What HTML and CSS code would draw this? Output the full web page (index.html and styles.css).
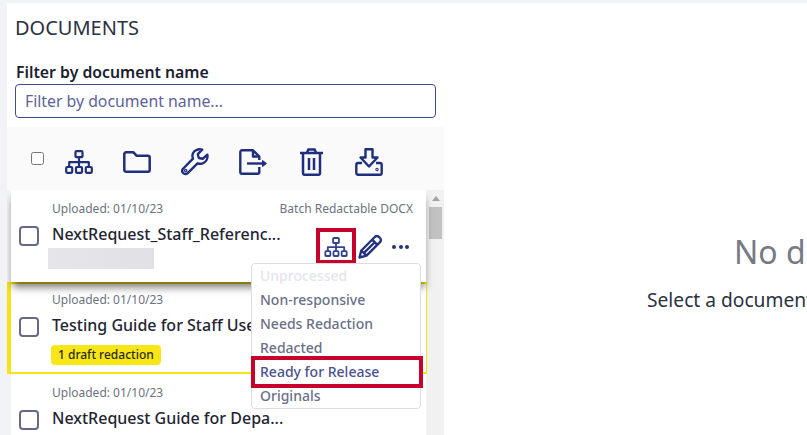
FILE: index.html
```html
<!DOCTYPE html>
<html lang="en">
<head>
<meta charset="utf-8">
<title>Documents</title>
<link rel="stylesheet" href="styles.css">
</head>
<body>
<svg class="defs" width="0" height="0" aria-hidden="true">
  <symbol id="org" viewBox="0 0 28 24">
    <g fill="none" stroke="currentColor" stroke-width="2.2" stroke-linejoin="round">
      <rect x="10.5" y="1.2" width="7" height="6" rx="1"/>
      <rect x="1.2" y="17" width="6" height="5.8" rx="1"/>
      <rect x="11" y="17" width="6" height="5.8" rx="1"/>
      <rect x="20.8" y="17" width="6" height="5.8" rx="1"/>
      <path d="M14 7.2V17M4.2 17v-4.8h19.6V17"/>
    </g>
  </symbol>
</svg>
<div class="page">
  <main class="panel">
    <div class="head">
      <h1 class="title">DOCUMENTS</h1>
      <label class="label" for="filter">Filter by document name</label>
      <input class="filter" id="filter" type="text" placeholder="Filter by document name...">
    </div>
    <div class="toolbar">
      <input class="all" type="checkbox">
      <div class="tools">
        <span class="tool"><svg class="i-org"><use href="#org"/></svg></span>
        <span class="tool">
          <svg class="i-folder" viewBox="0 0 28 22" fill="none" stroke="currentColor" stroke-width="2.5" stroke-linejoin="round"><path d="M1.3 3a1.7 1.7 0 0 1 1.7-1.7h7.5l3 3.4H25a1.7 1.7 0 0 1 1.7 1.7V19a1.7 1.7 0 0 1-1.7 1.7H3A1.7 1.7 0 0 1 1.3 19z"/></svg>
        </span>
        <span class="tool">
          <svg class="i-wrench" viewBox="0 0 28 28" fill="none" stroke="currentColor" stroke-width="2.4" stroke-linejoin="round" stroke-linecap="round"><path d="M26.3 6.6l-4.6 4.2-3.9-.8-1-3.8 4.4-4.5C17.500.6 13.500 2 12.100 5c-.9 1.900-.8 3.900-.1 5.600L2.300 20.500c-1.400 1.400-1.300 3.300-.2 4.500 1.200 1.300 3.300 1.400 4.600.1l9.800-9.800c2 .7 4.100.7 6-.3 2.900-1.500 4.600-5 3.800-8.400z"/><circle cx="4.700" cy="22.600" r=".6"/></svg>
        </span>
        <span class="tool">
          <svg class="i-export" viewBox="0 0 28 26" fill="none" stroke="currentColor" stroke-width="2.400" stroke-linejoin="round"><path d="M20.300 11V7.500L14 1.300H3A1.700 1.700 0 0 0 1.300 3v20A1.700 1.700 0 0 0 3 24.700h15.600a1.700 1.700 0 0 0 1.700-1.700v-5"/><path d="M14 1.300v6.200h6.300"/><path d="M8 14.500h17"/><path d="M23.500 11.500l4 3-4 3z" fill="currentColor" stroke-width="1"/></svg>
        </span>
        <span class="tool">
          <svg class="i-trash" viewBox="0 0 23 28" fill="none" stroke="currentColor" stroke-width="2.500" stroke-linejoin="round"><path d="M0 5h23"/><path d="M7 5l1.200-3.400h6.600L16 5"/><path d="M3 5v20.300a1.500 1.500 0 0 0 1.500 1.500h14a1.500 1.500 0 0 0 1.500-1.500V5"/><path d="M9 10v12M14 10v12"/></svg>
        </span>
        <span class="tool">
          <svg class="i-down" viewBox="0 0 28 28" fill="none" stroke="currentColor" stroke-width="2.400" stroke-linejoin="round"><path d="M10.500 1.300h7v8.200h5L14 18.500 5.500 9.500h5z"/><path d="M7 15H3a1.700 1.700 0 0 0-1.700 1.700v8.300A1.700 1.700 0 0 0 3 26.700h22a1.700 1.700 0 0 0 1.700-1.700v-8.300A1.700 1.700 0 0 0 25 15h-4"/><circle cx="22" cy="21.500" r=".5"/></svg>
        </span>
      </div>
    </div>
    <div class="list">
      <div class="cards">
        <article class="card raised">
          <span class="box"></span>
          <div class="body">
            <div class="meta"><span>Uploaded: 01/10/23</span><span>Batch Redactable DOCX</span></div>
            <div class="name">NextRequest_Staff_Referenc...</div>
            <div class="blur"></div>
          </div>
          <div class="actions">
            <svg class="a-org"><use href="#org"/></svg>
            <svg class="a-pen" viewBox="0 0 24 24" fill="none" stroke="currentColor" stroke-width="2.4" stroke-linejoin="round"><path d="M1.500 22.500l1.800-7L16.800 2c1.300-1.200 3-1.200 4.200 0l1 1c1.200 1.200 1.200 3 0 4.200L8.500 20.700z"/><path d="M14.200 4.600l5.200 5.200M3.300 15.500l5.200 5.200M6 17.900L17.500 6.500" /></svg>
            <span class="dots"><i></i><i></i><i></i></span>
          </div>
          <ul class="menu">
            <li class="off">Unprocessed</li>
            <li>Non-responsive</li>
            <li>Needs Redaction</li>
            <li>Redacted</li>
            <li class="on">Ready for Release</li>
            <li>Originals</li>
          </ul>
          <span class="mark mark-icon"></span>
        </article>
        <article class="card draft">
          <span class="box"></span>
          <div class="body">
            <div class="meta"><span>Uploaded: 01/10/23</span></div>
            <div class="name">Testing Guide for Staff Use...</div>
            <span class="badge">1 draft redaction</span>
          </div>
        </article>
        <article class="card">
          <span class="box"></span>
          <div class="body">
            <div class="meta"><span>Uploaded: 01/10/23</span></div>
            <div class="name">NextRequest Guide for Depa...</div>
          </div>
        </article>
      </div>
      <div class="scroll"><span class="arrow"></span><span class="thumb"></span></div>
    </div>
  </main>
  <section class="empty">
    <h2 class="none">No document selected</h2>
    <p class="hint">Select a document to view</p>
  </section>
</div>
</body>
</html>
```

FILE: styles.css
```css
* { box-sizing: border-box; }
html, body { margin: 0; height: 100%; overflow: hidden; }
body { background: #f2f3f6; font-family: "Noto Sans", "Open Sans", sans-serif; color: #1f2533; }
.defs { position: absolute; }
.page { display: flex; height: 435px; width: 1240px; margin: 3px 0 0 7px; background: #fff; }
.panel { width: 437px; flex: none; height: 432px; display: flex; flex-direction: column; overflow: hidden; }
.head { height: 124px; padding: 11px 8px 0 8px; flex: none; display: flex; flex-direction: column; align-items: flex-start; background: #fff; }
.title { margin: 0; font-size: 20px; line-height: 27px; font-weight: 400; color: #2a3142; }
.label { margin: 20px 0 0 1px; font-size: 15.800px; line-height: 22px; font-weight: 600; color: #1b2030; }
.filter { width: 421px; height: 34px; margin-top: 1px; padding: 0 9px; border: 1px solid #3f4b96; border-radius: 4px; font: 400 15.800px "Noto Sans", sans-serif; color: #3f4b96; outline: none; background: #fff; }
.filter::placeholder { color: #5c6399; opacity: 1; }
.toolbar { height: 63px; flex: none; display: flex; align-items: center; padding-left: 24px; background: #fafafa; color: #1f2f7e; }
.all { width: 13px; height: 13px; margin: 0; flex: none; }
.tools { display: flex; margin-left: 6px; padding-top: 6px; }
.tool { width: 58px; height: 30px; display: flex; align-items: center; justify-content: center; }
.i-org { width: 28px; height: 24px; }
.i-folder { width: 28px; height: 22px; }
.i-wrench { width: 28px; height: 28px; }
.i-export { width: 28px; height: 26px; }
.i-trash { width: 23px; height: 28px; }
.i-down { width: 28px; height: 28px; }
.list { flex: 1; display: flex; background: #f2f3f6; min-height: 0; }
.cards { width: 420px; flex: none; display: flex; flex-direction: column; }
.card { position: relative; flex: none; height: 92px; margin-left: 4px; width: 415px; background: #fff; display: flex; padding: 11px 0 0 8px; }
.raised { z-index: 2; box-shadow: 0 7px 8px -2px rgba(0, 0, 0, .55); }
.draft { margin-left: 0; width: 420px; padding-left: 8px; border-style: solid; border-color: #f6e516; border-width: 2px 1px 2px 4px; padding-top: 8px; }
.box { width: 20px; height: 20px; flex: none; margin-top: 25px; border: 2.500px solid #666a85; border-radius: 4px; background: #fff; }
.body { width: 361px; margin-left: 13px; flex: none; }
.meta { display: flex; justify-content: space-between; font-size: 12px; line-height: 16px; color: #6b7280; }
.name { margin-top: 5px; font-size: 16px; line-height: 24px; font-weight: 500; color: #1f2533; white-space: nowrap; }
.blur { width: 106px; height: 21px; margin: 2px 0 0 -4px; background: linear-gradient(90deg, #e6e6ea, #e0e0e5); }
.badge { display: inline-block; height: 20px; margin: 8px 0 0 -1px; padding: 0 7px; border-radius: 4px; background: #f9e616; font-size: 12px; line-height: 20px; font-weight: 500; color: #2b2b1a; }
.actions { position: absolute; left: 313px; top: 45px; display: flex; align-items: center; color: #25337f; }
.a-org { width: 24px; height: 20px; color: #34438c; }
.a-pen { width: 24px; height: 24px; margin-left: 10px; color: #25337f; }
.dots { display: flex; gap: 2.500px; margin-left: 10px; }
.dots i { width: 4px; height: 4px; border-radius: 50%; background: #25337f; }
.menu { position: absolute; z-index: 3; left: 240px; top: 73px; width: 170px; height: 146px; margin: 0; padding: 0; list-style: none; background: #fff; border: 1px solid #dcdce2; border-radius: 4px; font-size: 14px; font-weight: 500; line-height: 24px; color: #6b7088; }
.menu li { padding-left: 8px; white-space: nowrap; }
.off { color: #e4e5ea; }
.on { position: relative; color: #4a5290; }
.on::after { content: ""; position: absolute; left: -1px; right: -3px; top: -4px; bottom: -4px; border: 4px solid #c8002c; }
.mark { position: absolute; border: 4px solid #c8002c; }
.mark-icon { left: 305px; top: 38px; width: 40px; height: 36px; }
.scroll { width: 17px; flex: none; background: #f1f1f1; }
.arrow { display: block; width: 0; margin: 6px auto 0; border: 4px solid transparent; border-top: 0; border-bottom: 5px solid #a3a3a3; }
.thumb { display: block; width: 13px; height: 32px; margin: 6px 2px 0; background: #c1c1c1; }
.empty { flex: none; display: flex; flex-direction: column; align-items: flex-start; padding: 227px 0 0 203px; }
.none { margin: 0 0 0 87px; font-size: 32px; line-height: 44px; font-weight: 400; color: #767a82; white-space: nowrap; }
.hint { margin: 13px 0 0; font-size: 19.200px; line-height: 26px; color: #2a3142; white-space: nowrap; }
```
